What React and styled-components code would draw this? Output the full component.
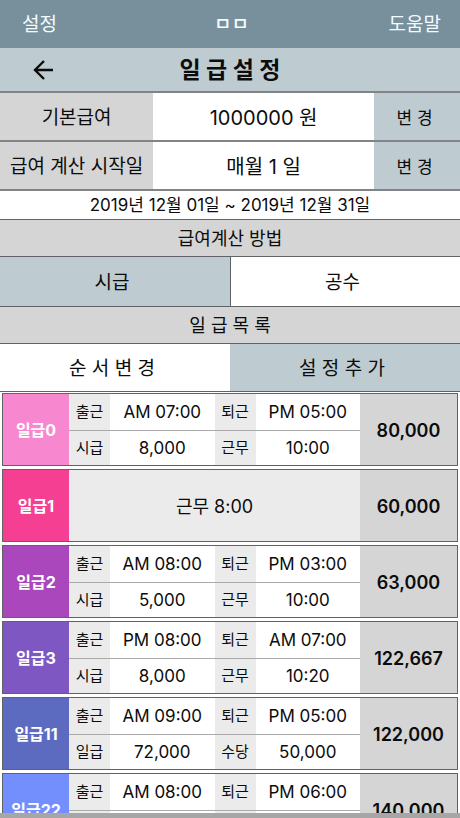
import { useState } from "react";
import styled, { createGlobalStyle, ThemeProvider } from "styled-components";

const theme = {
  colors: {
    nav: "#78909c",
    tint: "#becbd0",
    panel: "#d5d5d5",
    label: "#ebebeb",
    line: "#5f6365",
    thickLine: "#808486",
    softLine: "#aaaaaa",
    text: "#0c0c0c",
    bar: "#a6a6a6",
  },
};

const GlobalStyle = createGlobalStyle`
  * {
    box-sizing: border-box;
  }

  body {
    margin: 0;
    background-color: #fff;
  }

  body, button {
    font-family: Inter, "Noto Sans CJK KR", sans-serif;
  }
`;

const Page = styled.div`
  display: flex;
  flex-direction: column;
  height: 100vh;
  color: ${props => props.theme.colors.text};
  background-color: #fff;
`;

const Button = styled.button`
  padding: 0;
  border: 0;
  color: inherit;
  background: none;
  font-size: 19px;
  line-height: 24px;
  cursor: pointer;
`;

const NavBar = styled.nav`
  display: grid;
  grid-template-columns: 1fr auto 1fr;
  align-items: center;
  flex: none;
  height: 48px;
  padding: 2px 19px 0 22px;
  color: #f3fbff;
  background-color: ${props => props.theme.colors.nav};
`;

const NavButton = styled(Button)`
  justify-self: ${props => props.$side};
`;

const NavTitle = styled.span`
  font-size: 19px;
  line-height: 24px;
  font-weight: 500;
`;

const TitleBar = styled.header`
  display: grid;
  grid-template-columns: 1fr auto 1fr;
  align-items: center;
  flex: none;
  height: 45px;
  padding: 0 32px;
  border-bottom: 2px solid ${props => props.theme.colors.thickLine};
  background-color: ${props => props.theme.colors.tint};
`;

const BackButton = styled(Button)`
  display: flex;
  justify-self: start;
`;

const Title = styled.h1`
  margin: 0;
  font-size: 23px;
  line-height: 28px;
  font-weight: 700;
`;

const SettingRow = styled.div`
  display: grid;
  grid-template-columns: 1fr 48% 86px;
  flex: none;
  height: 49px;
  border-bottom: 2px solid ${props => props.theme.colors.thickLine};
`;

const SettingCell = styled.div`
  display: flex;
  justify-content: center;
  align-items: center;
  padding-top: 2px;
  font-size: ${props => (props.$label ? "19px" : "20px")};
  line-height: 24px;
  white-space: nowrap;
  background-color: ${props => (props.$label ? props.theme.colors.panel : "#fff")};
`;

const ChangeButton = styled(Button)`
  padding: 2px 5px 0 0;
  font-size: 17px;
  background-color: ${props => props.theme.colors.tint};
`;

const Period = styled.p`
  flex: none;
  margin: 0;
  padding: 2px 0;
  border-bottom: 1px solid ${props => props.theme.colors.line};
  font-size: 17px;
  line-height: 24px;
  text-align: center;
`;

const SectionTitle = styled.h2`
  display: flex;
  justify-content: center;
  align-items: center;
  flex: none;
  height: 37px;
  margin: 0;
  padding-top: 2px;
  border-bottom: 1px solid ${props => props.theme.colors.line};
  font-size: 18px;
  line-height: 24px;
  font-weight: 400;
  background-color: ${props => props.theme.colors.panel};
`;

const ButtonPair = styled.div`
  display: grid;
  grid-template-columns: 1fr 1fr;
  flex: none;
  height: ${props => props.$height};
  border-bottom: 1px solid ${props => props.theme.colors.line};
`;

const PairButton = styled(Button)`
  padding: 2px 6px 0 0;
  border-left: ${props => (props.$divided ? "1px" : "0")} solid ${props => props.theme.colors.line};
  background-color: ${props => (props.$tinted ? props.theme.colors.tint : "#fff")};
`;

const List = styled.ul`
  display: flex;
  flex-direction: column;
  flex: 1;
  gap: 3px;
  min-height: 0;
  margin: 0;
  padding: 1px 2px 0 2px;
  list-style: none;
  overflow-y: auto;
  scrollbar-width: none;
`;

const Card = styled.li`
  display: grid;
  grid-template-columns: 66px 1fr 97px;
  flex: none;
  height: 73px;
  border: 1px solid ${props => props.theme.colors.line};
`;

const CardName = styled.div`
  display: flex;
  justify-content: center;
  align-items: center;
  color: #fff;
  font-size: 16px;
  line-height: 24px;
  font-weight: 700;
  background-color: ${props => props.$color};
`;

const Details = styled.div`
  display: grid;
  grid-template-rows: 1fr 1fr;
`;

const DetailRow = styled.div`
  display: grid;
  grid-template-columns: 41px 1fr 41px 1fr;

  & + & {
    border-top: 1px solid ${props => props.theme.colors.softLine};
  }
`;

const DetailLabel = styled.div`
  display: flex;
  justify-content: center;
  align-items: center;
  font-size: 15px;
  line-height: 20px;
  background-color: ${props => props.theme.colors.label};
`;

const DetailValue = styled.div`
  display: flex;
  justify-content: center;
  align-items: center;
  font-size: 17px;
  line-height: 24px;
  background-color: #fff;
`;

const Summary = styled.div`
  display: flex;
  justify-content: center;
  align-items: center;
  padding-top: 2px;
  font-size: 18px;
  line-height: 24px;
  background-color: ${props => props.theme.colors.label};
`;

const Total = styled.div`
  display: flex;
  justify-content: center;
  align-items: center;
  padding-top: 2px;
  font-size: 18px;
  line-height: 24px;
  font-weight: 600;
  background-color: ${props => props.theme.colors.panel};
`;

const BottomBar = styled.footer`
  flex: none;
  height: 5px;
  background-color: ${props => props.theme.colors.bar};
`;

const wages = [
  {
    name: "일급0",
    color: "#f788d0",
    total: "80,000",
    rows: [
      ["출근", "AM 07:00", "퇴근", "PM 05:00"],
      ["시급", "8,000", "근무", "10:00"],
    ],
  },
  { name: "일급1", color: "#f43f92", total: "60,000", summary: "근무 8:00" },
  {
    name: "일급2",
    color: "#aa47bc",
    total: "63,000",
    rows: [
      ["출근", "AM 08:00", "퇴근", "PM 03:00"],
      ["시급", "5,000", "근무", "10:00"],
    ],
  },
  {
    name: "일급3",
    color: "#7e57c2",
    total: "122,667",
    rows: [
      ["출근", "PM 08:00", "퇴근", "AM 07:00"],
      ["시급", "8,000", "근무", "10:20"],
    ],
  },
  {
    name: "일급11",
    color: "#5c6bc0",
    total: "122,000",
    rows: [
      ["출근", "AM 09:00", "퇴근", "PM 05:00"],
      ["일급", "72,000", "수당", "50,000"],
    ],
  },
  {
    name: "일급22",
    color: "#738ffe",
    total: "140,000",
    rows: [
      ["출근", "AM 08:00", "퇴근", "PM 06:00"],
      ["", "", "", ""],
    ],
  },
];

const BackIcon = () => (
  <svg width="22" height="22" viewBox="0 0 22 22" fill="none" stroke="#0c0c0c" strokeWidth="2.4" aria-hidden="true">
    <path d="M21 11H3.5M12 2L3 11l9 9" />
  </svg>
);

const Setting = ({ label, value }) => (
  <SettingRow>
    <SettingCell $label>{label}</SettingCell>
    <SettingCell>{value}</SettingCell>
    <ChangeButton type="button" aria-label={`${label} 변경`}>변 경</ChangeButton>
  </SettingRow>
);

const WageCard = ({ wage }) => (
  <Card>
    <CardName $color={wage.color}>{wage.name}</CardName>
    {wage.summary ? (
      <Summary>{wage.summary}</Summary>
    ) : (
      <Details>
        {wage.rows.map(([label, value, sideLabel, sideValue]) => (
          <DetailRow key={label}>
            <DetailLabel>{label}</DetailLabel>
            <DetailValue>{value}</DetailValue>
            <DetailLabel>{sideLabel}</DetailLabel>
            <DetailValue>{sideValue}</DetailValue>
          </DetailRow>
        ))}
      </Details>
    )}
    <Total>{wage.total}</Total>
  </Card>
);

const App = () => {
  const [method, setMethod] = useState("시급");

  return (
    <ThemeProvider theme={theme}>
      <GlobalStyle />
      <Page>
        <NavBar>
          <NavButton type="button" $side="start">설정</NavButton>
          <NavTitle>ㅁㅁ</NavTitle>
          <NavButton type="button" $side="end">도움말</NavButton>
        </NavBar>
        <TitleBar>
          <BackButton type="button" aria-label="뒤로">
            <BackIcon />
          </BackButton>
          <Title>일 급 설 정</Title>
        </TitleBar>
        <Setting label="기본급여" value="1000000 원" />
        <Setting label="급여 계산 시작일" value="매월 1 일" />
        <Period>2019년 12월 01일 ~ 2019년 12월 31일</Period>
        <SectionTitle>급여계산 방법</SectionTitle>
        <ButtonPair $height="50px">
          {["시급", "공수"].map((name, index) => (
            <PairButton
              key={name}
              type="button"
              aria-pressed={method === name}
              $tinted={method === name}
              $divided={index > 0}
              onClick={() => setMethod(name)}
            >
              {name}
            </PairButton>
          ))}
        </ButtonPair>
        <SectionTitle>일 급 목 록</SectionTitle>
        <ButtonPair $height="48px">
          <PairButton type="button">순 서 변 경</PairButton>
          <PairButton type="button" $tinted>설 정 추 가</PairButton>
        </ButtonPair>
        <List>
          {wages.map(wage => (
            <WageCard key={wage.name} wage={wage} />
          ))}
        </List>
        <BottomBar />
      </Page>
    </ThemeProvider>
  );
};

export default App;
